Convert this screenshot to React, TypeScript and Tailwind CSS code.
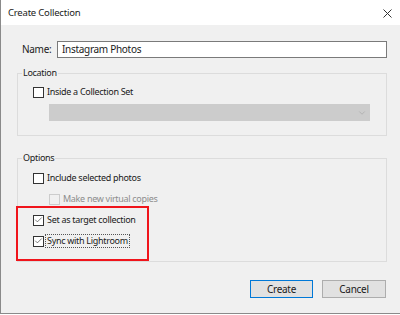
import { Check, ChevronDown } from 'lucide-react'

const font = { fontFamily: '"Noto Sans", "Liberation Sans", sans-serif' }

type BoxProps = { checked?: boolean; disabled?: boolean; label: string; focus?: boolean; indent?: boolean }

const CheckRow = ({ checked, disabled, label, focus, indent }: BoxProps) => {
	return (
		<div className={`flex items-center h-[16px] ${indent ? 'pl-[16px]' : ''}`}>
			<span
				className={`flex items-center justify-center w-[11px] h-[11px] border ${
					disabled ? 'border-[#cccccc] bg-[#f0f0f0]' : 'border-[#333333] bg-white'
				}`}
			>
				{checked && <Check size={10} strokeWidth={1.6} className="text-[#222]" />}
			</span>
			<span
				className={`ml-[1px] px-[1px] leading-[12px] ${disabled ? 'text-[#8d8d8d]' : 'text-[#1a1a1a]'} ${
					focus ? 'border border-dotted border-[#555]' : 'border border-transparent'
				}`}
			>
				{label}
			</span>
		</div>
	)
}

export default function App() {
	return (
		<div className="relative w-[400px] h-[315px] bg-white text-[9px] tracking-[-0.3px] text-[#1a1a1a]" style={font}>
			<div className="flex flex-col h-[314px] bg-[#f0f0f0] border-l border-b border-[#8a8a8a]">
				<div className="flex items-center justify-between h-[25px] bg-white pl-[7px] pr-[8px] pt-[1px]">
					<span className="text-[9.5px] tracking-[-0.2px]">Create Collection</span>
					<svg width="9" height="9" viewBox="0 0 9 9" className="text-[#333]">
						<path d="M0.5 0.5 L8.5 8.5 M8.5 0.5 L0.5 8.5" stroke="currentColor" strokeWidth="1" />
					</svg>
				</div>

				<div className="flex flex-col pl-[16px] pr-[13px] pt-[16px]">
					<div className="flex items-center h-[17px] text-[10px]">
						<span className="w-[40px] pl-[5px]">Name:</span>
						<div className="flex-1 h-[17px] border border-[#7a7a7a] bg-white pl-[4px] leading-[15px]">
							Instagram Photos
						</div>
					</div>

					<fieldset className="mt-[7px] border border-[#dcdcdc] pb-[14px]">
						<legend className="ml-[4px] px-[1px] leading-[16px]">Location</legend>
						<div className="flex flex-col pl-[15px] pt-[3px]">
							<CheckRow label="Inside a Collection Set" />
							<div className="flex items-center justify-end mt-[4px] ml-[16px] mr-[16px] h-[17px] bg-[#cccccc] pr-[3px]">
								<ChevronDown size={10} strokeWidth={1.2} className="text-[#9a9a9a]" />
							</div>
						</div>
					</fieldset>

					<fieldset className="mt-[14px] border border-[#dcdcdc] pb-[12px]">
						<legend className="ml-[4px] px-[1px] leading-[16px]">Options</legend>
						<div className="flex flex-col gap-[5px] pl-[15px] pt-[4px]">
							<CheckRow label="Include selected photos" />
							<CheckRow label="Make new virtual copies" disabled indent />
							<CheckRow label="Set as target collection" checked />
							<CheckRow label="Sync with Lightroom" checked focus />
						</div>
					</fieldset>

					<div className="flex justify-end gap-[9px] mt-[18px] pr-[1px] text-[10px]">
						<button className="w-[63px] h-[18px] bg-[#e1e1e1] border border-[#0078d7] leading-[16px]">Create</button>
						<button className="w-[64px] h-[18px] bg-[#e1e1e1] border border-[#adadad] leading-[16px]">Cancel</button>
					</div>
				</div>
			</div>

			<div className="absolute left-[16px] top-[206px] w-[133px] h-[55px] border-2 border-[#f0141b]" />
		</div>
	)
}
